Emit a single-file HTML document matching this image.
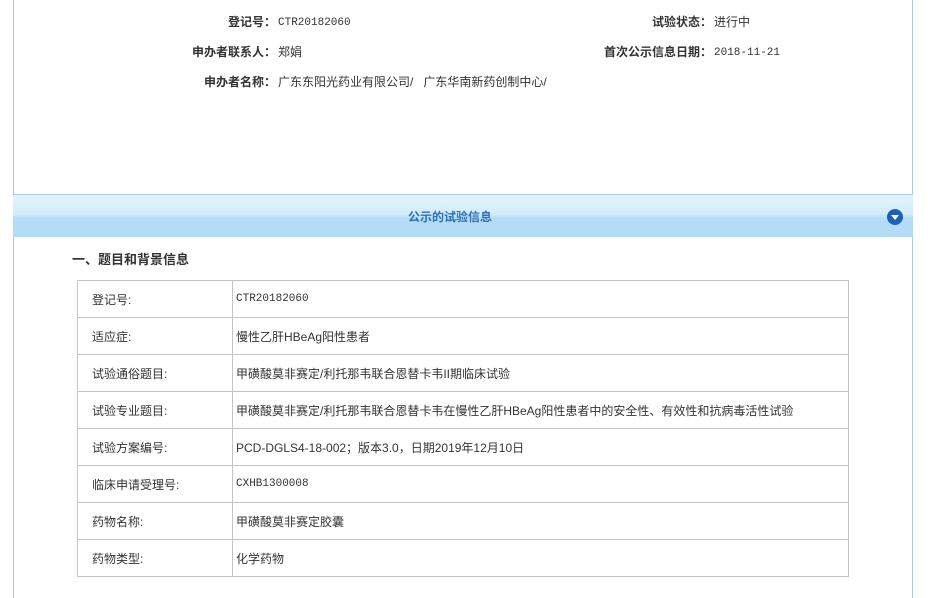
<!DOCTYPE html>
<html><head><meta charset="utf-8"><style>
*{margin:0;padding:0;box-sizing:border-box}
body{width:928px;height:584px;overflow:hidden;background:#fff;font-family:"Liberation Sans","Noto Sans CJK SC","WenQuanYi Zen Hei",sans-serif;font-size:12px;color:#333;position:relative}
.frame{position:absolute;left:13px;top:-2px;width:900px;height:600px;border-left:1px solid #a9c9e2;border-right:1px solid #a9c9e2}
.lbl{position:absolute;font-weight:bold;color:#333;text-align:right;font-size:12px;line-height:16px}
.val{position:absolute;font-size:12px;color:#333;line-height:16px}
.mono{font-family:"Liberation Mono",monospace;font-size:11px}
.band{position:absolute;left:13px;top:194px;width:900px;height:43px;border-top:1px solid #a9c9e2;background:linear-gradient(#e3f3fc 0,#d3ecfa 45%,#b5ddf6 55%,#b2dbf5 100%)}
.band .t{position:absolute;left:0;right:26px;top:13px;text-align:center;color:#2e6fb8;font-weight:bold;font-size:12px}
.band .ic{position:absolute;right:10px;top:14px;width:16px;height:16px;border-radius:50%;background:#1f5fb5}
.band .ic:after{content:"";position:absolute;left:4px;top:6px;border-left:4px solid transparent;border-right:4px solid transparent;border-top:5px solid #fff}
h3{position:absolute;left:72px;top:249px;font-size:13px;font-weight:bold;color:#333}
table{position:absolute;left:77px;top:280px;width:772px;border-collapse:collapse}
td{border:1px solid #c4c4c4;height:37px;padding:0 0 0 14px;font-size:12px;color:#333;vertical-align:middle}
td.k{width:155px}
td.v{padding-left:3px}
td.mono{font-size:11px}
</style></head><body>
<div class="frame"></div>
<div class="lbl" style="left:180px;width:96px;top:14px">登记号：</div><div class="val mono" style="left:278px;top:15px">CTR20182060</div>
<div class="lbl" style="left:150px;width:126px;top:44px">申办者联系人：</div><div class="val" style="left:278px;top:44px">郑娟</div>
<div class="lbl" style="left:150px;width:126px;top:74px">申办者名称：</div><div class="val" style="left:278px;top:74px">广东东阳光药业有限公司/&nbsp;&nbsp;&nbsp;广东华南新药创制中心/</div>
<div class="lbl" style="left:600px;width:112px;top:14px">试验状态：</div><div class="val" style="left:714px;top:14px">进行中</div>
<div class="lbl" style="left:560px;width:152px;top:44px">首次公示信息日期：</div><div class="val mono" style="left:714px;top:45px">2018-11-21</div>
<div class="band"><div class="t">公示的试验信息</div><div class="ic"></div></div>
<h3>一、题目和背景信息</h3>
<table>
<tr><td class="k">登记号:</td><td class="v mono">CTR20182060</td></tr>
<tr><td class="k">适应症:</td><td class="v">慢性乙肝HBeAg阳性患者</td></tr>
<tr><td class="k">试验通俗题目:</td><td class="v">甲磺酸莫非赛定/利托那韦联合恩替卡韦II期临床试验</td></tr>
<tr><td class="k">试验专业题目:</td><td class="v">甲磺酸莫非赛定/利托那韦联合恩替卡韦在慢性乙肝HBeAg阳性患者中的安全性、有效性和抗病毒活性试验</td></tr>
<tr><td class="k">试验方案编号:</td><td class="v">PCD-DGLS4-18-002；版本3.0，日期2019年12月10日</td></tr>
<tr><td class="k">临床申请受理号:</td><td class="v mono">CXHB1300008</td></tr>
<tr><td class="k">药物名称:</td><td class="v">甲磺酸莫非赛定胶囊</td></tr>
<tr><td class="k">药物类型:</td><td class="v">化学药物</td></tr>
</table>
</body></html>
